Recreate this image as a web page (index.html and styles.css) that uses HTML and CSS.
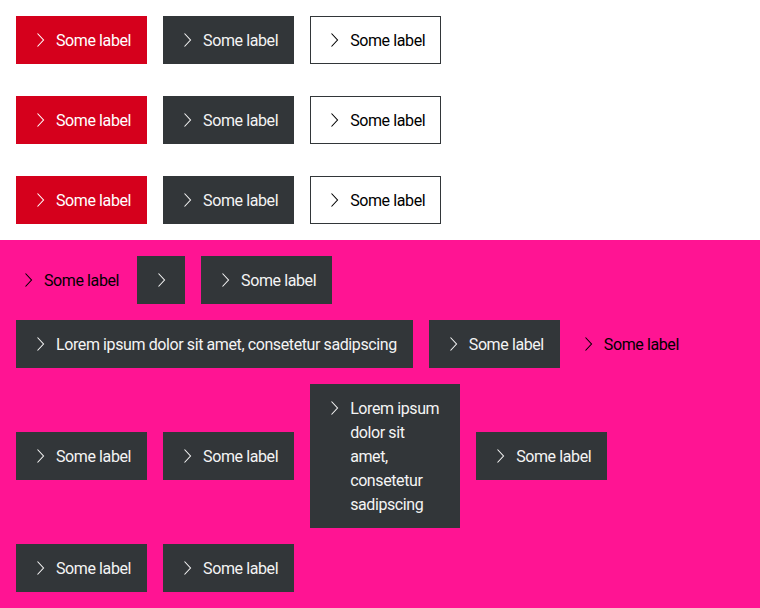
FILE: index.html
```html
<!DOCTYPE html>
<html>
<head>
<meta charset="utf-8">
<link rel="stylesheet" href="styles.css">
</head>
<body>
<svg width="0" height="0" class="defs">
  <symbol id="chev" viewBox="0 0 24 24"><path d="M9.5 5.5 L15.5 12 L9.5 18.5" fill="none" stroke="currentColor" stroke-width="1.1"/></symbol>
</svg>
<section class="light">
  <div class="row">
    <button class="btn primary"><svg class="icon"><use href="#chev"/></svg>Some label</button>
    <button class="btn secondary"><svg class="icon"><use href="#chev"/></svg>Some label</button>
    <button class="btn outline"><svg class="icon"><use href="#chev"/></svg>Some label</button>
  </div>
  <div class="row">
    <button class="btn primary"><svg class="icon"><use href="#chev"/></svg>Some label</button>
    <button class="btn secondary"><svg class="icon"><use href="#chev"/></svg>Some label</button>
    <button class="btn outline"><svg class="icon"><use href="#chev"/></svg>Some label</button>
  </div>
  <div class="row">
    <button class="btn primary"><svg class="icon"><use href="#chev"/></svg>Some label</button>
    <button class="btn secondary"><svg class="icon"><use href="#chev"/></svg>Some label</button>
    <button class="btn outline"><svg class="icon"><use href="#chev"/></svg>Some label</button>
  </div>
</section>
<section class="pink">
  <div class="row">
    <button class="btn ghost"><svg class="icon"><use href="#chev"/></svg>Some label</button>
    <button class="btn secondary icon-only"><svg class="icon"><use href="#chev"/></svg></button>
    <button class="btn secondary"><svg class="icon"><use href="#chev"/></svg>Some label</button>
  </div>
  <div class="row">
    <button class="btn secondary"><svg class="icon"><use href="#chev"/></svg>Lorem ipsum dolor sit amet, consetetur sadipscing</button>
    <button class="btn secondary"><svg class="icon"><use href="#chev"/></svg>Some label</button>
    <button class="btn ghost"><svg class="icon"><use href="#chev"/></svg>Some label</button>
  </div>
  <div class="row center">
    <button class="btn secondary"><svg class="icon"><use href="#chev"/></svg>Some label</button>
    <button class="btn secondary"><svg class="icon"><use href="#chev"/></svg>Some label</button>
    <button class="btn secondary narrow"><svg class="icon"><use href="#chev"/></svg>Lorem ipsum dolor sit amet, consetetur sadipscing</button>
    <button class="btn secondary"><svg class="icon"><use href="#chev"/></svg>Some label</button>
  </div>
  <div class="row">
    <button class="btn secondary"><svg class="icon"><use href="#chev"/></svg>Some label</button>
    <button class="btn secondary"><svg class="icon"><use href="#chev"/></svg>Some label</button>
  </div>
</section>
</body>
</html>
```
FILE: styles.css
```css
html, body { margin: 0; padding: 0; }
body {
  width: 760px;
  height: 608px;
  overflow: hidden;
  font-family: Roboto, "Liberation Sans", sans-serif;
}
.defs { position: absolute; }
.light {
  background: #fff;
  padding: 16px;
  display: flex;
  flex-direction: column;
  gap: 32px;
}
.pink {
  background: #ff1493;
  padding: 16px;
  display: flex;
  flex-direction: column;
  gap: 16px;
  height: 336px;
}
.row {
  display: flex;
  gap: 16px;
  align-items: flex-start;
}
.row.center { align-items: center; }
.btn {
  position: relative;
  box-sizing: border-box;
  display: block;
  margin: 0;
  border: 1px solid transparent;
  padding: 12px 15px 10px 39px;
  font-family: inherit;
  font-size: 16px;
  font-weight: 400;
  letter-spacing: -0.4px;
  line-height: 24px;
  text-align: left;
  min-height: 48px;
  cursor: pointer;
}
.icon {
  position: absolute;
  left: 11px;
  top: 11px;
  width: 24px;
  height: 24px;
}
.primary { background: #d5001c; border-color: #d5001c; color: #fff; }
.secondary { background: #323639; border-color: #323639; color: #f4f4f4; }
.outline { background: #fff; border-color: #323639; color: #000; }
.ghost {
  background: transparent;
  border: 0;
  color: #000;
  padding: 13px 2px 11px 28px;
}
.ghost .icon { left: 0; top: 12px; }
.icon-only { width: 48px; padding: 0; }
.icon-only .icon { left: 11px; }
.narrow { width: 150px; }
```
